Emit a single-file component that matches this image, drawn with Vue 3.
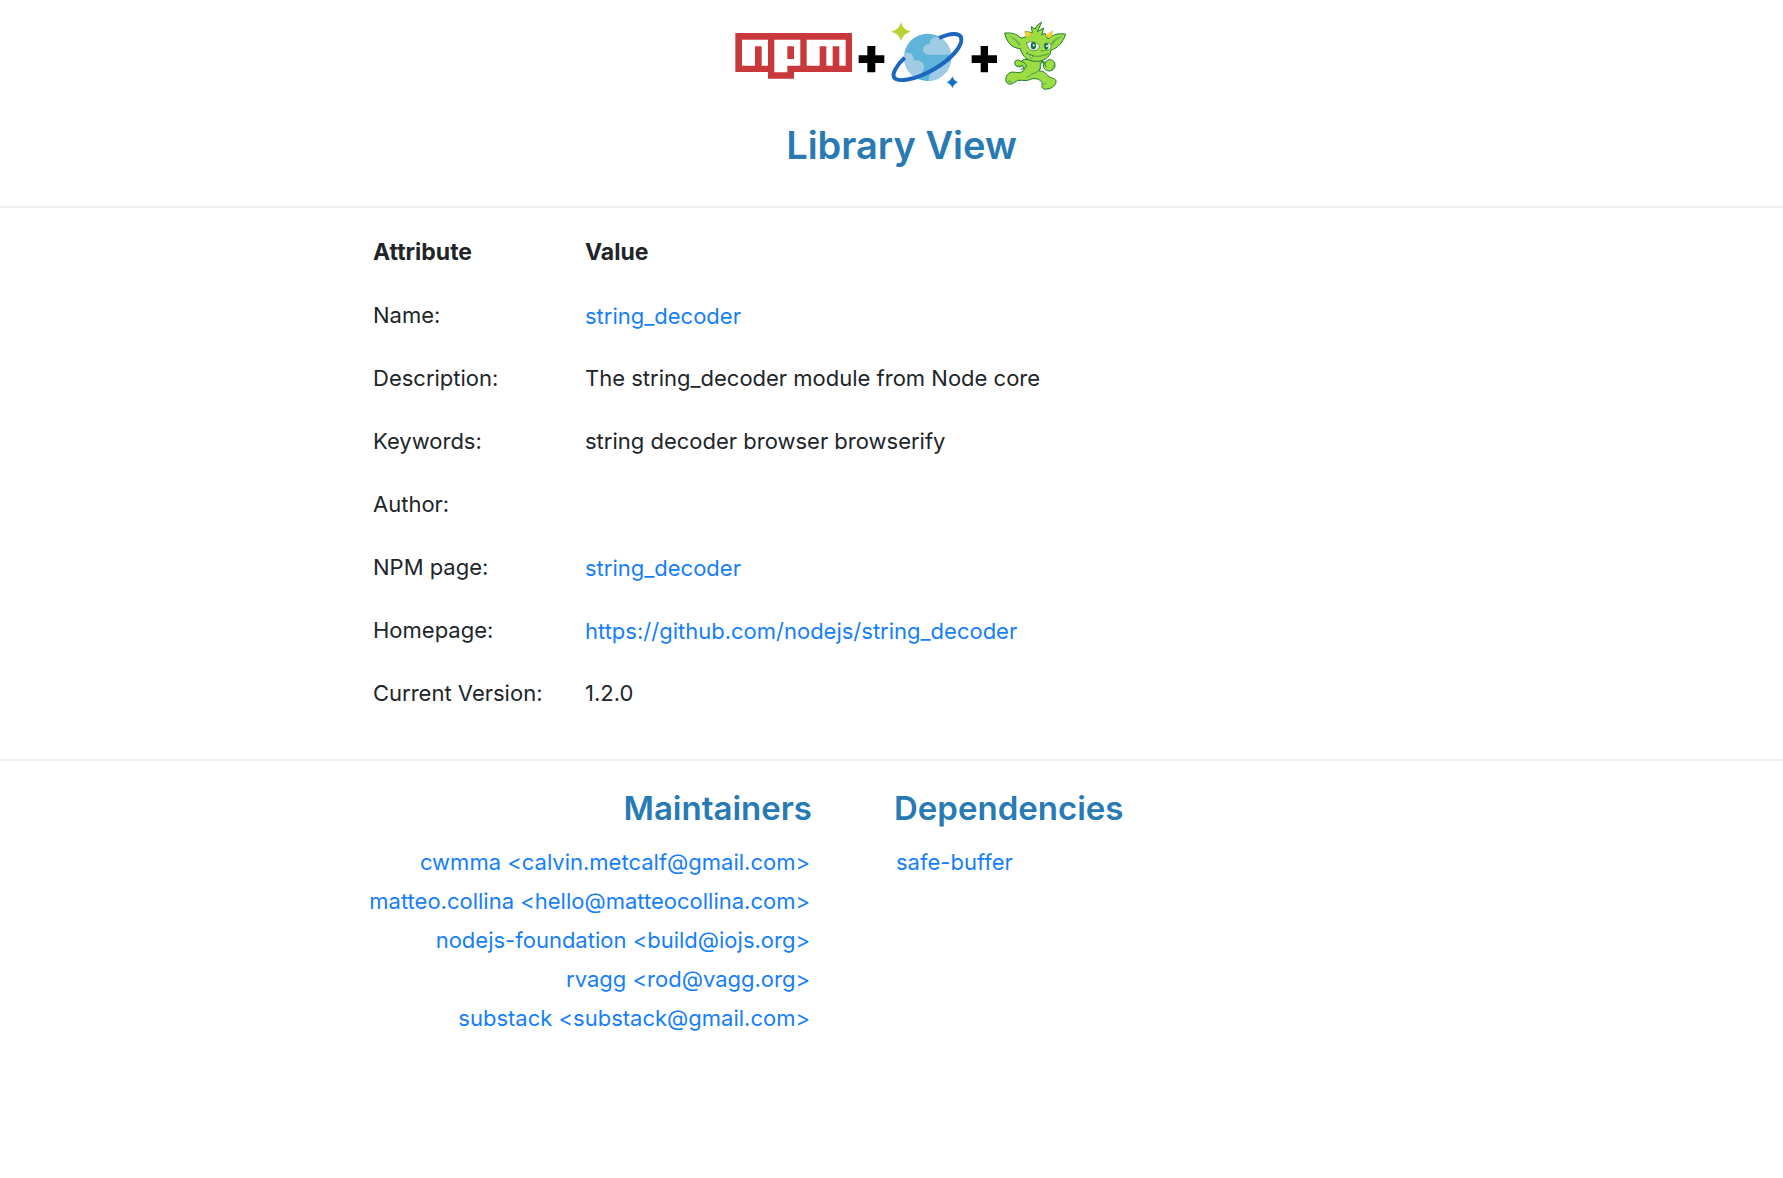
<script setup>
const link = '#'
const attributes = [
  { label: 'Name:', value: 'string_decoder', href: link },
  { label: 'Description:', value: 'The string_decoder module from Node core' },
  { label: 'Keywords:', value: 'string decoder browser browserify' },
  { label: 'Author:', value: '' },
  { label: 'NPM page:', value: 'string_decoder', href: 'https://www.npmjs.com/package/string_decoder' },
  { label: 'Homepage:', value: 'https://github.com/nodejs/string_decoder', href: 'https://github.com/nodejs/string_decoder' },
  { label: 'Current Version:', value: '1.2.0' },
]
const maintainers = [
  'cwmma <calvin.metcalf@gmail.com>',
  'matteo.collina <hello@matteocollina.com>',
  'nodejs-foundation <build@iojs.org>',
  'rvagg <rod@vagg.org>',
  'substack <substack@gmail.com>',
]
const dependencies = ['safe-buffer']
</script>

<template>
  <div class="page">
    <header class="header">
      <svg class="logo" viewBox="45 33 999 210" role="img" aria-label="npm, Cosmos DB and Gremlin">
        <!-- npm -->
        <path fill="#c9383b" d="M46 69H396V186H222V206H144V186H46Z" />
        <path fill="#fff" fill-rule="evenodd" d="M66 89H144V167H125V109H105V167H66ZM163 89H241V167H202V187H163ZM202 109V147H222V109ZM260 89H377V167H358V109H338V167H319V109H299V167H260Z" />
        <!-- pluses -->
        <path fill="#000" d="M442 108H466V136H493V159H466V187H442V159H416V136H442Z" />
        <path fill="#000" d="M782 108H804V136H831V159H804V187H782V159H755V136H782Z" />
        <!-- planet -->
        <clipPath id="globe"><circle cx="623" cy="142" r="71" /></clipPath>
        <circle cx="623" cy="142" r="71" fill="#5eb4d9" />
        <g clip-path="url(#globe)" fill="#9fcce4">
          <path d="M700 134H627C603 134 603 102 629 103C629 80 653 75 663 88V60H700Z" />
          <path d="M545 128H566Q581 130 582 151C606 148 619 165 609 183Q600 203 569 207L540 190Z" />
          <path d="M626 220C624 196 636 181 652 180Q656 159 675 158L700 150V220Z" />
        </g>
        <path fill="none" stroke="#1c66c0" stroke-width="12" d="M657 84C691 69 717 68 723 82C731 105 694 148 643 177C589 209 532 219 522 202C516 190 530 166 554 143" />
        <path fill="#b7d334" d="M543 36Q548 60 573 65Q548 70 543 94Q538 70 513 65Q538 60 543 36Z" />
        <path fill="#0d70c2" d="M697 199Q701 213 715 217Q701 221 697 235Q693 221 679 217Q693 213 697 199Z" />
        <!-- gremlin -->
        <g transform="translate(810 15)" fill="#9bdd43" stroke="#1f7a30" stroke-width="3" stroke-linejoin="round" stroke-linecap="round">
          <path d="M93 139C81 131 72 136 75 148C78 155 88 159 97 151L103 165C93 176 80 172 67 171C50 173 43 191 50 202C54 210 66 209 74 202Q81 193 98 196C112 199 118 193 129 191C142 190 151 194 157 203C153 216 157 225 171 222C187 221 200 208 198 197C195 189 178 189 170 179C164 169 156 169 148 168Q154 159 152 144L162 143C157 158 165 167 177 168C191 167 198 157 194 144C189 131 173 131 166 142L145 136L103 133Z" />
          <path d="M93 139C104 142 111 149 109 155Q104 163 93 163M166 142Q160 151 169 155" fill="none" />
          <path d="M93 69C78 55 64 53 44 54C49 79 63 99 91 101C96 119 105 132 123 137C146 143 168 135 176 123Q184 116 182 106C205 99 219 80 227 58C205 53 188 59 174 72L165 55L155 60L161 39L142 50L155 22C143 28 138 34 136 42L124 35L127 53L106 50L112 63Z" />
          <path d="M57 63C73 67 84 77 91 87L88 92C80 80 70 70 57 63ZM215 65C198 67 188 76 183 86L186 92C192 80 203 71 215 65Z" fill="#62b45c" stroke="#62b45c" stroke-width="1" />
          <path d="M105 48L126 54L121 62L108 68ZM187 48L185 66L172 67L166 62Z" fill="#fbd22f" stroke="#8a9a22" stroke-width="1" />
          <path d="M110 84Q129 73 148 91Q148 106 130 107Q113 106 110 84ZM164 86Q180 79 183 94Q183 105 169 106Z" fill="#fff" stroke-width="2" />
          <ellipse cx="130" cy="92" rx="8" ry="11" fill="#147646" stroke="none" />
          <ellipse cx="169" cy="94" rx="6" ry="10" fill="#147646" stroke="none" />
          <circle cx="131" cy="91" r="3" fill="#fff" stroke="none" />
          <circle cx="171" cy="93" r="3" fill="#fff" stroke="none" />
          <path d="M153 107Q158 110 162 107" fill="none" stroke-width="2" />
          <path d="M111 114C127 128 154 126 176 116M108 117L114 112" fill="none" stroke-width="2" />
          <path d="M120 120L124 130L129 123Z" fill="#fff" stroke-width="2" />
          <path d="M151 145Q155 172 125 177Q119 185 111 186M75 151Q84 156 93 152M184 163Q193 157 192 151M161 208L168 206M55 198L65 202" fill="none" stroke="#4aa653" stroke-width="3" />
        </g>
      </svg>
      <h1>Library View</h1>
    </header>

    <main>
      <section class="band">
        <div class="container">
          <table class="attributes">
            <thead>
              <tr><th scope="col">Attribute</th><th scope="col">Value</th></tr>
            </thead>
            <tbody>
              <tr v-for="row in attributes" :key="row.label">
                <td>{{ row.label }}</td>
                <td><a v-if="row.href" :href="row.href">{{ row.value }}</a><template v-else>{{ row.value }}</template></td>
              </tr>
            </tbody>
          </table>
        </div>
      </section>

      <section class="band">
        <div class="container columns">
          <div class="people">
            <h2>Maintainers</h2>
            <ul>
              <li v-for="person in maintainers" :key="person"><a :href="link">{{ person }}</a></li>
            </ul>
          </div>
          <div class="packages">
            <h2>Dependencies</h2>
            <ul>
              <li v-for="name in dependencies" :key="name"><a :href="link">{{ name }}</a></li>
            </ul>
          </div>
        </div>
      </section>
    </main>
  </div>
</template>

<style>
body {
  margin: 0;
  background: #fff;
}
</style>

<style scoped>
.page {
  color: #212529;
  font-family: Inter, "Liberation Sans", sans-serif;
  font-size: 22px;
  line-height: 39px;
}

.header {
  display: flex;
  flex-direction: column;
  align-items: center;
  gap: 28px;
  padding: 21px 0 34px 20px;
}

.logo {
  width: 333px;
  height: 70px;
}

h1,
h2 {
  margin: 0;
  color: #287ab5;
  font-weight: 600;
}

h1 {
  font-size: 38px;
  line-height: 53px;
}

h2 {
  font-size: 33px;
  line-height: 48px;
}

a {
  color: #157efb;
  text-decoration: none;
}

.band {
  border-top: 2px solid #efefef;
}

.container {
  max-width: 1051px;
  margin: 0 auto;
}

.attributes {
  margin: 13px 4px 34px;
  border-collapse: collapse;
}

th,
td {
  height: 63px;
  padding: 0 3px;
  text-align: left;
}

th {
  font-size: 23px;
  font-weight: 700;
}

th:first-child {
  width: 206px;
}

td a {
  display: inline-block;
  padding-top: 2px;
}

.columns {
  display: flex;
  gap: 82px;
  padding-top: 23px;
}

.people {
  width: 446px;
  text-align: right;
  white-space: nowrap;
}

ul {
  margin: 11px 0 0;
  padding: 0 2px;
  list-style: none;
}
</style>
